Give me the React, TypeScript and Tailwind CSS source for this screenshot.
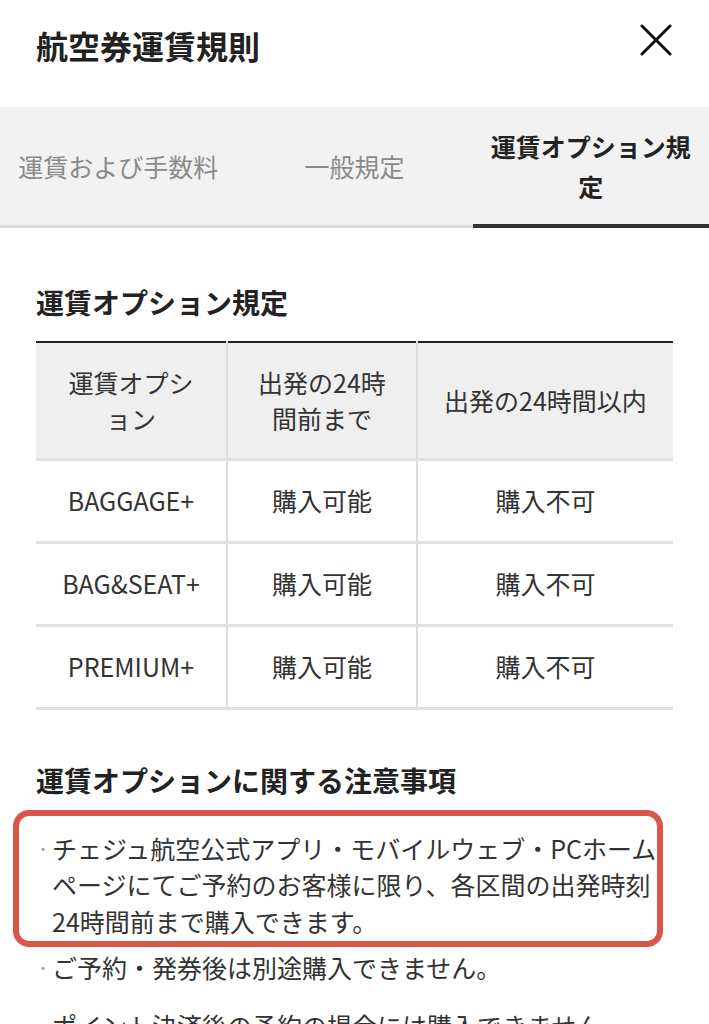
import React from 'react';

const tabs = ['運賃および手数料', '一般規定', '運賃オプション規定'];

const rows = [
  { name: 'BAGGAGE+', before: '購入可能', within: '購入不可' },
  { name: 'BAG&SEAT+', before: '購入可能', within: '購入不可' },
  { name: 'PREMIUM+', before: '購入可能', within: '購入不可' },
];

const notes = [
  'チェジュ航空公式アプリ・モバイルウェブ・PCホームページにてご予約のお客様に限り、各区間の出発時刻24時間前まで購入できます。',
  'ご予約・発券後は別途購入できません。',
  'ポイント決済後の予約の場合には購入できません。',
];

const App: React.FC = () => {
  return (
    <div className="w-[709px] h-[1024px] overflow-hidden bg-white text-[#333] font-['Noto_Sans_CJK_JP','Noto_Sans',sans-serif]">
      {/* header */}
      <div className="h-[107px] px-[36px] pt-[24px] flex items-start justify-between">
        <h1 className="text-[32px] leading-[42px] font-bold text-[#222]">航空券運賃規則</h1>
        <button className="w-[32px] h-[32px] mr-[1px]" aria-label="close">
          <svg viewBox="0 0 32 32" width="32" height="32" fill="none" stroke="#111" strokeWidth="3" strokeLinecap="round">
            <line x1="2" y1="2" x2="30" y2="30" />
            <line x1="30" y1="2" x2="2" y2="30" />
          </svg>
        </button>
      </div>

      {/* tabs */}
      <div className="grid grid-cols-3 bg-[#f2f2f2]">
        {tabs.map((t, i) => (
          <div
            key={t}
            className={`h-[121px] px-[12px] flex items-center justify-center text-center text-[25px] leading-[40px] ${
              i === 2 ? 'border-b-4 border-[#333] font-bold text-[#222]' : 'border-b-[3px] border-[#dcdcdc] text-[#8a8a8a]'
            }`}
          >
            {t}
          </div>
        ))}
      </div>

      <div className="px-[36px]">
        <h2 className="mt-[54px] text-[28px] leading-[40px] font-bold text-[#222]">運賃オプション規定</h2>

        <table className="mt-[19px] w-full table-fixed border-collapse text-[25px] text-center">
          <colgroup>
            <col className="w-[191px]" />
            <col className="w-[190px]" />
            <col />
          </colgroup>
          <thead>
            <tr className="bg-[#efefef] border-t-2 border-[#222]">
              {['運賃オプション', '出発の24時間前まで', '出発の24時間以内'].map((h, i) => (
                <th
                  key={h}
                  className={`h-[117px] px-[22px] font-normal leading-[36px] ${i > 0 ? 'border-l-2 border-[#dddddd]' : ''}`}
                >
                  {h}
                </th>
              ))}
            </tr>
          </thead>
          <tbody>
            {rows.map((r) => (
              <tr key={r.name} className="border-t-[3px] border-[#e0e0e0]">
                <td className="h-[83px] px-[10px]">{r.name}</td>
                <td className="h-[83px] border-l-2 border-[#dddddd]">{r.before}</td>
                <td className="h-[83px] border-l-2 border-[#dddddd]">{r.within}</td>
              </tr>
            ))}
            <tr className="border-t-[3px] border-[#e0e0e0]">
              <td colSpan={3} className="h-0 p-0" />
            </tr>
          </tbody>
        </table>

        <h2 className="mt-[50px] text-[28px] leading-[40px] font-bold text-[#222]">運賃オプションに関する注意事項</h2>

        <ul className="mt-[30px] text-[25px] leading-[36.5px]">
          {notes.map((n, i) => (
            <li key={i} className={`relative flex ${i === 1 ? 'mt-[10px]' : i === 2 ? 'mt-[21px]' : ''}`}>
              {i === 0 && (
                <span className="absolute left-[-23px] right-[10px] top-[-20px] bottom-[-8px] rounded-[16px] border-[6px] border-[#d8574a] pointer-events-none" />
              )}
              <span className="w-[16px] shrink-0 text-[14px] text-[#999]">・</span>
              <span className="flex-1">{n}</span>
            </li>
          ))}
        </ul>
      </div>
    </div>
  );
};

export default App;
